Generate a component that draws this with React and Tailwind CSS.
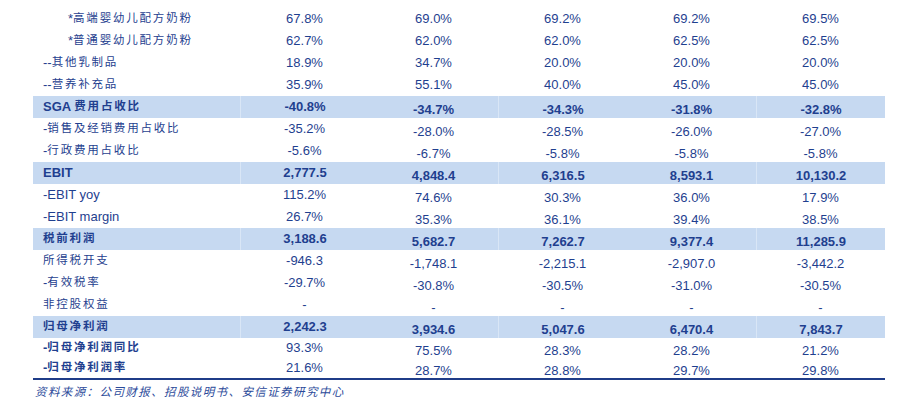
import React from 'react'

const rows = [
  { label: '*高端婴幼儿配方奶粉', indent: true, v: ['67.8%', '69.0%', '69.2%', '69.2%', '69.5%'] },
  { label: '*普通婴幼儿配方奶粉', indent: true, v: ['62.7%', '62.0%', '62.0%', '62.5%', '62.5%'] },
  { label: '--其他乳制品', v: ['18.9%', '34.7%', '20.0%', '20.0%', '20.0%'] },
  { label: '--营养补充品', v: ['35.9%', '55.1%', '40.0%', '45.0%', '45.0%'] },
  { label: 'SGA 费用占收比', hl: true, v: ['-40.8%', '-34.7%', '-34.3%', '-31.8%', '-32.8%'] },
  { label: '-销售及经销费用占收比', v: ['-35.2%', '-28.0%', '-28.5%', '-26.0%', '-27.0%'] },
  { label: '-行政费用占收比', v: ['-5.6%', '-6.7%', '-5.8%', '-5.8%', '-5.8%'] },
  { label: 'EBIT', hl: true, v: ['2,777.5', '4,848.4', '6,316.5', '8,593.1', '10,130.2'] },
  { label: '-EBIT yoy', v: ['115.2%', '74.6%', '30.3%', '36.0%', '17.9%'] },
  { label: '-EBIT margin', v: ['26.7%', '35.3%', '36.1%', '39.4%', '38.5%'] },
  { label: '税前利润', hl: true, v: ['3,188.6', '5,682.7', '7,262.7', '9,377.4', '11,285.9'] },
  { label: '所得税开支', v: ['-946.3', '-1,748.1', '-2,215.1', '-2,907.0', '-3,442.2'] },
  { label: '-有效税率', v: ['-29.7%', '-30.8%', '-30.5%', '-31.0%', '-30.5%'] },
  { label: '非控股权益', v: ['-', '-', '-', '-', '-'] },
  { label: '归母净利润', hl: true, v: ['2,242.3', '3,934.6', '5,047.6', '6,470.4', '7,843.7'] },
  { label: '-归母净利润同比', bold: true, short: true, v: ['93.3%', '75.5%', '28.3%', '28.2%', '21.2%'] },
  { label: '-归母净利润率', bold: true, short: true, v: ['21.6%', '28.7%', '28.8%', '29.7%', '29.8%'] },
]

// split label into latin / cjk runs so cjk gets the wider spacing
function Label({ text }) {
  const parts = text.split(/([\u4e00-\u9fff：、]+)/)
  return parts.map((p, i) =>
    /[\u4e00-\u9fff]/.test(p) ? (
      <span key={i} className="text-[11.5px] tracking-[1.8px]">{p}</span>
    ) : (
      <span key={i} className="text-[13px] whitespace-pre">{p}</span>
    )
  )
}

export default function App() {
  return (
    <div className="w-[908px] h-[407px] bg-white pt-[8px] pl-[33px] text-[#1f3f8f] font-['Liberation_Sans','Noto_Sans_CJK_SC',sans-serif]">
      <div className="w-[852px]">
        {rows.map((r, idx) => {
          const bold = r.hl || r.bold
          return (
            <div
              key={idx}
              className={`flex ${r.short ? 'h-[20px]' : 'h-[22px]'} ${r.hl ? 'bg-[#c6d9f1]' : ''}`}
            >
              <div
                className={`w-[207px] flex items-center ${r.indent ? 'pl-[35px]' : 'pl-[10px]'} ${bold ? 'font-bold' : ''}`}
              >
                <Label text={r.label} />
              </div>
              {r.v.map((val, j) => (
                <div
                  key={j}
                  className={`w-[129px] flex items-center justify-center text-[13px] ${r.hl ? 'font-bold' : ''} ${j > 0 && idx >= 4 ? 'pt-[6px]' : ''} ${r.hl && (j === 0 || j === 2 || j === 4) ? 'border-l border-[#d9e6f6]' : ''}`}
                >
                  {val}
                </div>
              ))}
            </div>
          )
        })}
        <div className="h-[2px] bg-[#1f3c88]"></div>
      </div>
      <div className="pl-[2px] mt-[3px] italic text-[11.5px] tracking-[1.4px] text-[#2b4a9a] font-['Noto_Sans_CJK_SC',sans-serif]">
        资料来源：公司财报、招股说明书、安信证券研究中心
      </div>
    </div>
  )
}
